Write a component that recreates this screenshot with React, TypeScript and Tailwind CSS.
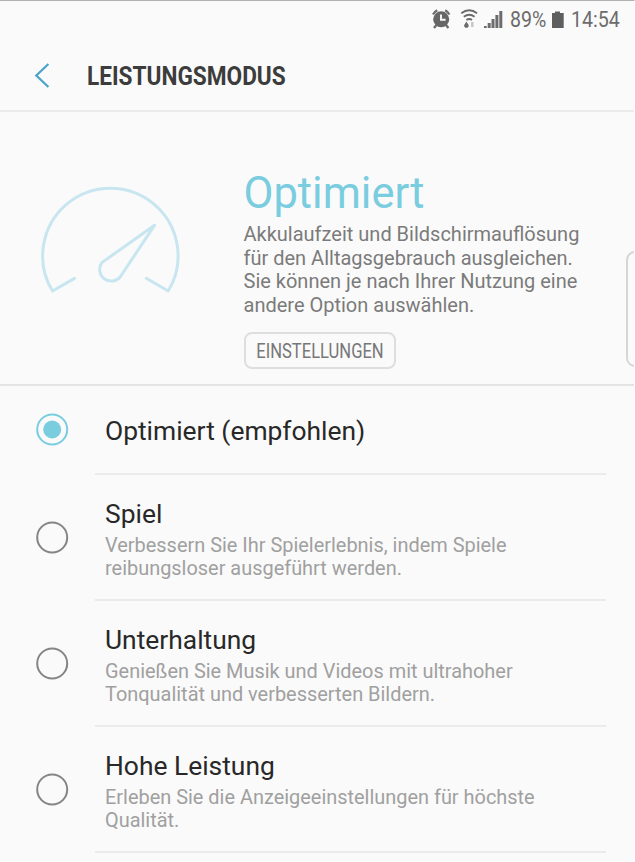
import { useState } from 'react';

type Mode = {
  id: string;
  title: string;
  lines: string[];
};

const modes: Mode[] = [
  { id: 'optimized', title: 'Optimiert (empfohlen)', lines: [] },
  {
    id: 'game',
    title: 'Spiel',
    lines: ['Verbessern Sie Ihr Spielerlebnis, indem Spiele', 'reibungsloser ausgeführt werden.'],
  },
  {
    id: 'entertainment',
    title: 'Unterhaltung',
    lines: ['Genießen Sie Musik und Videos mit ultrahoher', 'Tonqualität und verbesserten Bildern.'],
  },
  {
    id: 'high',
    title: 'Hohe Leistung',
    lines: ['Erleben Sie die Anzeigeeinstellungen für höchste', 'Qualität.'],
  },
];

export default function App() {
  const [selected, setSelected] = useState('optimized');

  return (
    <main className="relative h-[862px] w-[635px] overflow-hidden border-t border-r border-t-[#b0b0b0] border-r-white bg-[#fafafa] font-[Roboto,sans-serif]">
      <StatusBar />

      <header className="flex h-[73px] items-center border-b-2 border-[#ebebeb] pl-[34px]">
        <button className="flex w-[52.5px]" aria-label="Zurück">
          <svg width="18" height="26" viewBox="0 0 18 26" fill="none" stroke="#4ba3c8" strokeWidth="2.2">
            <path d="M14.4 2 2.3 13.5 14.4 25" />
          </svg>
        </button>
        <h1 className="origin-left scale-x-[0.87] pt-[2px] text-[26px] leading-none font-bold whitespace-nowrap text-[#3c3c3c]">
          LEISTUNGSMODUS
        </h1>
      </header>

      {/* Aktueller Modus */}
      <section className="flex h-[274px] border-b-2 border-[#e4e4e4] pl-[36px]">
        <div className="w-[207.5px] pt-[71px]">
          <Gauge />
        </div>
        <div className="pt-[57px]">
          <h2 className="text-[43.5px] leading-[50px] text-[#7accdf]">Optimiert</h2>
          <p className="mt-[4px] text-[20px] leading-[23.5px] whitespace-nowrap text-[#7b7b7b]">
            Akkulaufzeit und Bildschirmauflösung
            <br />
            für den Alltagsgebrauch ausgleichen.
            <br />
            Sie können je nach Ihrer Nutzung eine
            <br />
            andere Option auswählen.
          </p>
          <button className="mt-[15px] flex h-[37px] w-[152px] items-center justify-center rounded-[8px] border-2 border-[#dedede] pt-[2px] text-[19.5px] text-[#777]">
            <span className="scale-x-[0.85]">EINSTELLUNGEN</span>
          </button>
        </div>
      </section>

      {/* Auswahl */}
      <ul>
        {modes.map((mode) => (
          <li key={mode.id} className="flex cursor-pointer" onClick={() => setSelected(mode.id)}>
            <div className={mode.lines.length ? 'w-[95px] pt-[46px] pl-[36px]' : 'w-[95px] pt-[27px] pl-[36px]'}>
              <Radio checked={mode.id === selected} />
            </div>
            <div
              className={
                mode.lines.length
                  ? 'h-[126px] w-[511px] border-b-2 border-[#ebebeb] pt-[23px] pl-[10px]'
                  : 'h-[89px] w-[511px] border-b-2 border-[#ebebeb] pt-[29px] pl-[10px]'
              }
            >
              <h3 className="mb-[4px] text-[26.4px] leading-[32px] whitespace-nowrap text-[#282828]">{mode.title}</h3>
              {mode.lines.map((line) => (
                <p key={line} className="text-[19.93px] leading-[23.4px] whitespace-nowrap text-[#a0a0a0]">
                  {line}
                </p>
              ))}
            </div>
          </li>
        ))}
      </ul>

      {/* Edge-Griff */}
      <div className="absolute top-[250px] left-[626px] h-[116px] w-[20px] rounded-[9px] border-2 border-[#d6d6d6]" />
    </main>
  );
}

function StatusBar() {
  return (
    <div className="flex h-[38px] pt-[6px] pl-[432px] text-[22px] leading-[26px] text-[#6c6c6c]">
      <svg className="mt-[2px]" width="74" height="22" viewBox="432 9 74 22" fill="none" stroke="#6c6c6c">
        {/* Wecker */}
        <circle cx="441.2" cy="19.3" r="8" fill="#666" stroke="none" />
        <path d="M433 14.6a10.5 10.5 0 0 1 4.2-4.3M445.2 10.3a10.5 10.5 0 0 1 4.2 4.3" strokeWidth="2.2" />
        <path d="m436.4 25-2.4 3M446 25l2.4 3" strokeWidth="2.4" />
        <path d="M441 14.6v5.2h4.6" stroke="#fafafa" strokeWidth="1.9" />
        {/* WLAN */}
        <path d="M461.3 13.2q7.9-5.8 15.8 0M463.8 16.7q5.4-4 10.8 0M466.4 20q2.8-2.1 5.6 0" strokeWidth="1.9" />
        <path d="m466.4 21.5 2.2 3.4a2.3 2.3 0 1 1-4.4 0z" fill="#6c6c6c" stroke="none" />
        <path d="M472.3 22v5" stroke="#c4c4c4" strokeWidth="2.4" />
        {/* Empfang */}
        <path
          d="M484 26h2.7v2H484zM487.7 23h3v5h-3zM491.5 19h3v9h-3zM495.4 15h3v13h-3zM499.3 11h3v17h-3z"
          fill="#6c6c6c"
          stroke="none"
        />
      </svg>
      <span className="ml-[4px] w-[41px] origin-left scale-x-[0.89]">89%</span>
      <svg className="mt-[4px]" width="14" height="18" viewBox="0 0 14 18" fill="#5e5e5e">
        <path d="M4 .4h5V2h3.7v15H1V2h3z" />
      </svg>
      <span className="ml-[6px] origin-left scale-x-[0.89]">14:54</span>
    </div>
  );
}

function Gauge() {
  return (
    <svg
      width="148"
      height="116"
      viewBox="36 182 148 116"
      fill="none"
      stroke="#c8e6ef"
      strokeWidth="3"
      strokeLinejoin="round"
      strokeLinecap="round"
    >
      <path d="M74.5 277.4 52.5 290A67.7 67.7 0 1 1 168.2 290L146.3 277.2" />
      <path d="M154.5 224.3 102 261.5A11.6 11.6 0 1 0 120.5 275.5Z" />
    </svg>
  );
}

function Radio({ checked }: { checked: boolean }) {
  return (
    <svg width="33" height="33" viewBox="0 0 33 33" fill="none">
      <circle cx="16.2" cy="16.5" r="15" stroke={checked ? '#7accdf' : '#858585'} strokeWidth="2" />
      {checked && <circle cx="16.2" cy="16.5" r="9" fill="#7accdf" />}
    </svg>
  );
}
